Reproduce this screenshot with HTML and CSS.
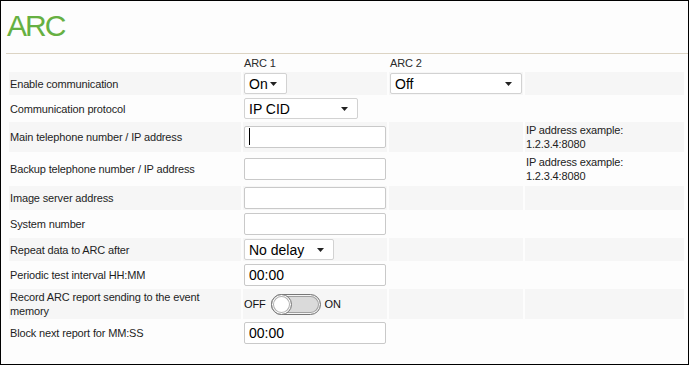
FILE: index.html
```html
<!DOCTYPE html>
<html lang="en">
<head>
  <meta charset="UTF-8">
  <title>ARC</title>
  <link rel="stylesheet" href="styles.css">
</head>
<body>

  <div class="panel">
    <h1 class="title">ARC</h1>

    <table class="settings">
      <colgroup>
        <col class="col-label">
        <col class="col-arc1">
        <col class="col-arc2">
        <col class="col-hint">
      </colgroup>
      <thead>
        <tr>
          <th></th>
          <th>ARC 1</th>
          <th>ARC 2</th>
          <th></th>
        </tr>
      </thead>
      <tbody>
        <tr class="alt">
          <td>Enable communication</td>
          <td><select class="sel sel-short"><option>On</option></select></td>
          <td><select class="sel sel-full"><option>Off</option></select></td>
          <td></td>
        </tr>
        <tr>
          <td>Communication protocol</td>
          <td><select class="sel sel-mid"><option>IP CID</option></select></td>
          <td></td>
          <td></td>
        </tr>
        <tr class="alt">
          <td>Main telephone number / IP address</td>
          <td>
            <span class="field">
              <input class="txt" type="text" value="">
              <span class="caret"></span>
            </span>
          </td>
          <td></td>
          <td class="hint">IP address example:<br>1.2.3.4:8080</td>
        </tr>
        <tr>
          <td>Backup telephone number / IP address</td>
          <td><input class="txt" type="text" value=""></td>
          <td></td>
          <td class="hint">IP address example:<br>1.2.3.4:8080</td>
        </tr>
        <tr class="alt">
          <td>Image server address</td>
          <td><input class="txt" type="text" value=""></td>
          <td></td>
          <td></td>
        </tr>
        <tr>
          <td>System number</td>
          <td><input class="txt" type="text" value=""></td>
          <td></td>
          <td></td>
        </tr>
        <tr class="alt">
          <td>Repeat data to ARC after</td>
          <td><select class="sel sel-delay"><option>No delay</option></select></td>
          <td></td>
          <td></td>
        </tr>
        <tr>
          <td>Periodic test interval HH:MM</td>
          <td><input class="txt" type="text" value="00:00"></td>
          <td></td>
          <td></td>
        </tr>
        <tr class="alt">
          <td>Record ARC report sending to the event memory</td>
          <td>
            <div class="switch">
              <span class="switch-text">OFF</span>
              <span class="toggle"><span class="knob"></span></span>
              <span class="switch-text">ON</span>
            </div>
          </td>
          <td></td>
          <td></td>
        </tr>
        <tr>
          <td>Block next report for MM:SS</td>
          <td><input class="txt" type="text" value="00:00"></td>
          <td></td>
          <td></td>
        </tr>
      </tbody>
    </table>
  </div>

</body>
</html>
```

FILE: styles.css
```css
body {
  margin: 0;
  background-color: #fff;
  font-family: "Liberation Sans", Arial, sans-serif;
  color: #1e1e1e;
}
.panel {
  width: 689px;
  height: 365px;
  box-sizing: border-box;
  border: 1px solid #000;
  background-color: #fdfdfd;
}
.title {
  margin: 0 0 0 5px;
  padding: 8px 0 10px 1px;
  font-size: 30px;
  line-height: 34px;
  font-weight: normal;
  letter-spacing: -2px;
  color: #66b042;
  border-bottom: 1px solid #dcd4c4;
}
.settings {
  margin-left: 6px;
  width: 679px;
  table-layout: fixed;
  border-spacing: 2px;
  border-collapse: separate;
  font-size: 11px;
  letter-spacing: -0.15px;
}
.col-label { width: 232px; }
.col-arc1 { width: 144px; }
.col-arc2 { width: 134px; }
.col-hint { width: 159px; }
th {
  height: 14px;
  padding: 0 1px;
  font-weight: normal;
  text-align: left;
  line-height: 14px;
  color: #2a2a2a;
}
td {
  padding: 1px;
  line-height: 14px;
  vertical-align: middle;
}
tr.alt td {
  background-color: #f6f6f6;
}
.hint {
  color: #222;
}
.sel {
  display: block;
  height: 21px;
  box-sizing: border-box;
  margin: 0;
  padding: 0 0 0 4px;
  border: 1px solid #d2d2d2;
  border-radius: 2px;
  background: #fff url("data:image/svg+xml;utf8,<svg xmlns='http://www.w3.org/2000/svg' width='7' height='4'><path d='M0 0h7L3.5 4z' fill='%23222'/></svg>") no-repeat right 9px center;
  -webkit-appearance: none;
  appearance: none;
  font-family: "Liberation Sans", Arial, sans-serif;
  font-size: 14px;
  letter-spacing: 0;
  color: #000;
}
.sel-short { width: 43px; }
.sel-mid { width: 114px; }
.sel-full { width: 132px; }
.sel-delay { width: 90px; }
.field {
  position: relative;
  display: block;
}
.txt {
  display: block;
  width: 100%;
  height: 22px;
  box-sizing: border-box;
  margin: 0;
  padding: 0 4px;
  border: 1px solid #c9c9c9;
  border-radius: 2px;
  background-color: #fff;
  font-family: "Liberation Sans", Arial, sans-serif;
  font-size: 14px;
  letter-spacing: 0;
  color: #000;
}
.caret {
  position: absolute;
  left: 5px;
  top: 2px;
  width: 1px;
  height: 17px;
  background-color: #000;
}
.switch {
  display: flex;
  align-items: center;
}
.switch-text {
  font-size: 11px;
  color: #111;
}
.toggle {
  display: flex;
  align-items: center;
  width: 50px;
  height: 21px;
  box-sizing: border-box;
  margin: 0 4px 0 5px;
  border: 1px solid #777;
  border-radius: 11px;
  background-color: #dadada;
  box-shadow: inset 0 0 0 1px #f4f4f4, inset 0 0 0 2px #a0a0a0;
}
.knob {
  width: 21px;
  height: 21px;
  box-sizing: border-box;
  margin-left: -1px;
  border: 1px solid #777;
  border-radius: 50%;
  background-color: #fff;
  box-shadow: inset 0 0 0 1px #fff, inset 0 0 0 2px #b0b0b0;
}
```
